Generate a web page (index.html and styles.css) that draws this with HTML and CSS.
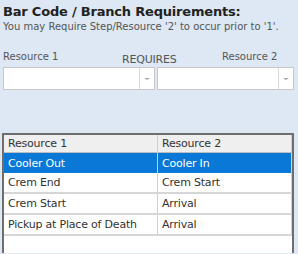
FILE: index.html
```html
<!DOCTYPE html>
<html lang="en">

<head>
    <meta charset="UTF-8">
    <title>Bar Code / Branch Requirements</title>
    <link rel="stylesheet" href="styles.css">
</head>

<body>
    <div class="panel">
        <h1 class="title">Bar Code / Branch Requirements:</h1>
        <div class="subtitle">You may Require Step/Resource '2' to occur prior to '1'.</div>

        <div class="labels">
            <span class="lbl">Resource 1</span>
            <span class="lbl requires">REQUIRES</span>
            <span class="lbl right">Resource 2</span>
        </div>
        <div class="pickers">
            <div class="combo">
                <div class="combo-text"></div>
                <div class="combo-btn"><span class="arrow"></span></div>
            </div>
            <div class="combo">
                <div class="combo-text"></div>
                <div class="combo-btn"><span class="arrow"></span></div>
            </div>
        </div>

        <div class="grid">
            <table>
                <tr class="head">
                    <th>Resource 1</th>
                    <th>Resource 2</th>
                </tr>
                <tr class="selected">
                    <td>Cooler Out</td>
                    <td>Cooler In</td>
                </tr>
                <tr>
                    <td>Crem End</td>
                    <td>Crem Start</td>
                </tr>
                <tr>
                    <td>Crem Start</td>
                    <td>Arrival</td>
                </tr>
                <tr>
                    <td>Pickup at Place of Death</td>
                    <td>Arrival</td>
                </tr>
            </table>
        </div>
    </div>
</body>

</html>
```

FILE: styles.css
```css
body {
    margin: 0;
    height: 254px;
    background: #dde8f4;
    font-family: "DejaVu Sans", sans-serif;
    overflow: hidden;
}

.panel {
    padding: 4px 4px 0 3px;
}

.title {
    margin: 0;
    font-size: 13px;
    line-height: 16px;
    font-weight: bold;
    color: #222;
    letter-spacing: -0.2px;
}

.subtitle {
    font-size: 10px;
    line-height: 13px;
    color: #555;
}

.labels {
    display: flex;
    margin-top: 17px;
    height: 16px;
    font-size: 10px;
    color: #555;
}

.lbl {
    width: 119px;
    line-height: 14px;
}

.requires {
    font-size: 11px;
    line-height: 20px;
    width: 100px;
    letter-spacing: -0.2px;
}

.right {
    width: auto;
}

.pickers {
    display: flex;
    gap: 2px;
    margin-top: 1px;
}

.combo {
    display: flex;
    height: 21px;
    background: #fff;
    border: 1px solid #c8c8c8;
}

.combo:first-child {
    width: 151px;
}

.combo:last-child {
    width: 136px;
}

.combo-text {
    flex: 1;
}

.combo-btn {
    width: 14px;
    border-left: 1px solid #d8d8d8;
    display: flex;
    align-items: center;
    justify-content: center;
}

.arrow {
    width: 0;
    height: 0;
    border-left: 3px solid transparent;
    border-right: 3px solid transparent;
    border-top: 2px solid #a8a8a8;
}

.grid {
    margin-top: 43px;
    margin-left: -1px;
    width: 292px;
    height: 120px;
    background: #fff;
    border: 2px solid #6e6e6e;
    border-bottom: 0;
    box-sizing: border-box;
}

table {
    border-collapse: collapse;
    width: 100%;
    font-size: 11px;
    color: #333;
}

th,
td {
    text-align: left;
    font-weight: normal;
    padding: 0 4px;
    border-right: 1px solid #cfcfcf;
    border-bottom: 2px solid #d6d6d6;
    letter-spacing: -0.2px;
    white-space: nowrap;
}

th:first-child,
td:first-child {
    width: 145px;
}

.head th {
    background: #efefef;
    height: 17px;
    border-bottom: 1px solid #bdbdbd;
}

td {
    height: 19px;
}

.selected td {
    background: #0a78d6;
    color: #fff;
    border-bottom: 0;
    height: 20px;
}
```
